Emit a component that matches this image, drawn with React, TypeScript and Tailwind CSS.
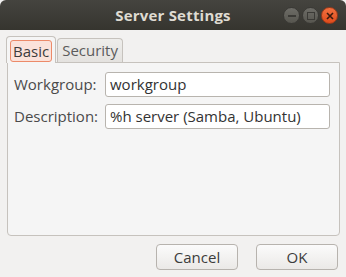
export default function App() {
  const font = { fontFamily: '"Open Sans", "DejaVu Sans", sans-serif' };
  return (
    <div className="flex h-[277px] w-[346px] flex-col overflow-hidden bg-[#f2f1f0] text-[#3c3c3c]" style={font}>
      {/* title bar */}
      <div className="relative flex h-[30px] shrink-0 items-center justify-center rounded-t-[6px] bg-gradient-to-b from-[#45443f] to-[#36352f]">
        <span className="text-[15px] font-bold tracking-[0.2px] text-[#dfdbd2]">Server Settings</span>
        <div className="absolute right-[8px] top-[7px] flex gap-[2px]">
          <div className="flex h-[17px] w-[17px] items-center justify-center rounded-full border border-[#3a3935] bg-gradient-to-b from-[#6d6c67] to-[#57564f]">
            <div className="h-[2px] w-[8px] bg-[#3b3a36]" />
          </div>
          <div className="flex h-[17px] w-[17px] items-center justify-center rounded-full border border-[#3a3935] bg-gradient-to-b from-[#6d6c67] to-[#57564f]">
            <div className="h-[8px] w-[8px] border-[1.5px] border-[#3b3a36]" />
          </div>
          <div className="flex h-[17px] w-[17px] items-center justify-center rounded-full border border-[#9e3a1a] bg-gradient-to-b from-[#f2703f] to-[#df4b1a]">
            <svg width="8" height="8" viewBox="0 0 8 8">
              <path d="M1 1L7 7M7 1L1 7" stroke="#3b1a0e" strokeWidth="1.6" />
            </svg>
          </div>
        </div>
      </div>

      {/* notebook */}
      <div className="flex flex-1 flex-col px-[6px] pt-[6px]">
        <div className="flex items-end">
          <div className="relative z-10 -mb-px flex h-[27px] items-start rounded-t-[4px] border border-b-0 border-[#c6c2bd] bg-[#f5f5f5] px-[3px] pt-[3px]">
            <div className="flex h-[22px] items-center rounded-[3px] border border-[#ec8a69] bg-[#fbe2da] px-[2px] text-[15px] leading-none">
              Basic
            </div>
          </div>
          <div className="ml-px flex h-[24px] items-center rounded-t-[4px] border border-b-0 border-[#c6c2bd] bg-gradient-to-b from-[#eeedeb] to-[#e4e2df] px-[4px] text-[15px] leading-none text-[#5b5b5b]">
            Security
          </div>
        </div>
        <div className="ml-px flex h-[174px] flex-col gap-[7px] rounded-b-[4px] border border-[#c6c2bd] bg-[#f5f5f5] pl-[6px] pr-[9px] pt-[9px]">
          <div className="flex items-center">
            <span className="w-[91px] text-[15px] text-[#4a4a4a]">Workgroup:</span>
            <div className="flex h-[25px] flex-1 items-center rounded-[3px] border border-[#b8b4ae] bg-white px-[4px] text-[15px] text-[#333]">
              workgroup
            </div>
          </div>
          <div className="flex items-center">
            <span className="w-[91px] text-[15px] text-[#4a4a4a]">Description:</span>
            <div className="flex h-[25px] flex-1 items-center rounded-[3px] border border-[#b8b4ae] bg-white px-[4px] text-[15px] text-[#333]">
              %h server (Samba, Ubuntu)
            </div>
          </div>
        </div>

        {/* buttons */}
        <div className="flex justify-end gap-[18px] pr-[2px] pt-[8px]">
          <button className="h-[26px] w-[82px] rounded-[4px] border border-[#b7b3ae] bg-gradient-to-b from-[#fbfbfb] to-[#ebe9e7] text-[15px] text-[#3c3c3c]">
            Cancel
          </button>
          <button className="h-[26px] w-[82px] rounded-[4px] border border-[#b7b3ae] bg-gradient-to-b from-[#fbfbfb] to-[#ebe9e7] text-[15px] text-[#3c3c3c]">
            OK
          </button>
        </div>
      </div>
    </div>
  );
}
